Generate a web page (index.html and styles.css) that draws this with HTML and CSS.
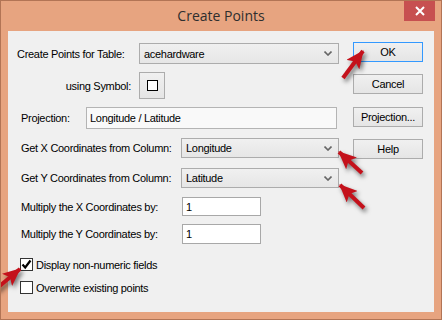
FILE: index.html
```html
<!DOCTYPE html>
<html lang="en">
<head>
    <meta charset="UTF-8">
    <title>Create Points</title>
    <link rel="stylesheet" href="styles.css">
</head>
<body>
    <div class="window">
        <div class="titlebar">
            <span></span>
            <span class="title">Create Points</span>
            <span class="close">
                <svg width="10" height="10" viewBox="0 0 10 10"><path d="M1 1 L9 9 M9 1 L1 9" stroke="#fff" stroke-width="2"/></svg>
            </span>
        </div>
        <div class="client">
            <div class="fields">
                <div class="row row-table">
                    <label class="lbl lbl-table">Create Points for Table:</label>
                    <div class="combo combo-table">
                        <span>acehardware</span>
                        <svg class="chev" width="8" height="5" viewBox="0 0 8 5"><path d="M0.5 0.5 L4 4 L7.5 0.5" fill="none" stroke="#666" stroke-width="1.6"/></svg>
                    </div>
                </div>
                <div class="row row-symbol">
                    <label class="lbl lbl-symbol">using Symbol:</label>
                    <div class="btn btn-symbol"><span class="square"></span></div>
                </div>
                <div class="row row-proj">
                    <label class="lbl lbl-proj">Projection:</label>
                    <div class="textbox textbox-proj">Longitude / Latitude</div>
                </div>
                <div class="row row-col">
                    <label class="lbl lbl-col">Get X Coordinates from Column:</label>
                    <div class="combo combo-col">
                        <span>Longitude</span>
                        <svg class="chev" width="8" height="5" viewBox="0 0 8 5"><path d="M0.5 0.5 L4 4 L7.5 0.5" fill="none" stroke="#666" stroke-width="1.6"/></svg>
                    </div>
                </div>
                <div class="row row-col row-gety">
                    <label class="lbl lbl-col">Get Y Coordinates from Column:</label>
                    <div class="combo combo-col">
                        <span>Latitude</span>
                        <svg class="chev" width="8" height="5" viewBox="0 0 8 5"><path d="M0.5 0.5 L4 4 L7.5 0.5" fill="none" stroke="#666" stroke-width="1.6"/></svg>
                    </div>
                </div>
                <div class="row row-mult">
                    <label class="lbl lbl-mult">Multiply the X Coordinates by:</label>
                    <div class="textbox textbox-mult">1</div>
                </div>
                <div class="row row-mult row-multy">
                    <label class="lbl lbl-mult">Multiply the Y Coordinates by:</label>
                    <div class="textbox textbox-mult">1</div>
                </div>
                <div class="check check-first">
                    <span class="box">
                        <svg width="11" height="11" viewBox="0 0 11 11"><path d="M1.5 5.5 L4.2 8.5 L9.5 1.5" fill="none" stroke="#000" stroke-width="2.2"/></svg>
                    </span>
                    <span>Display non-numeric fields</span>
                </div>
                <div class="check">
                    <span class="box"></span>
                    <span>Overwrite existing points</span>
                </div>
            </div>
            <div class="buttons">
                <div class="btn btn-ok">OK</div>
                <div class="btn btn-cancel">Cancel</div>
                <div class="btn btn-proj">Projection...</div>
                <div class="btn btn-help">Help</div>
            </div>
        </div>

        <svg class="arrows" width="442" height="320" viewBox="0 0 442 320">
            <defs>
                <marker id="head" markerUnits="userSpaceOnUse" markerWidth="18" markerHeight="16" refX="17" refY="8" orient="auto">
                    <path d="M0 0 L18 8 L0 16 L4 8 Z" fill="#c4111b"/>
                </marker>
            </defs>
            <g class="arrow-group">
                <line x1="343" y1="78" x2="363" y2="51" marker-end="url(#head)"/>
                <line x1="362" y1="173" x2="339" y2="152" marker-end="url(#head)"/>
                <line x1="364" y1="208" x2="340" y2="185" marker-end="url(#head)"/>
                <line x1="-4" y1="289" x2="20" y2="269" marker-end="url(#head)"/>
            </g>
        </svg>
    </div>
</body>
</html>
```

FILE: styles.css
```css
body {
    margin: 0;
    padding: 0;
    background: #fff;
    font-family: 'Liberation Sans', Arial, sans-serif;
    font-size: 11px;
    letter-spacing: -0.3px;
    color: #000;
}
.window {
    position: relative;
    width: 442px;
    height: 320px;
    box-sizing: border-box;
    background: #e7a480;
    border: 1px solid #b27455;
    overflow: hidden;
}
.titlebar {
    height: 30px;
    display: grid;
    grid-template-columns: 1fr auto 1fr;
    align-items: start;
}
.title {
    font-family: 'Open Sans', 'Noto Sans', sans-serif;
    font-size: 14px;
    letter-spacing: 0;
    color: #2e2e2e;
    line-height: 30px;
}
.close {
    justify-self: end;
    width: 31px;
    height: 20px;
    margin-right: 6px;
    background: #c75050;
    display: flex;
    align-items: center;
    justify-content: center;
}
.client {
    margin: 0 7px;
    height: 281px;
    background: #f0f0f0;
    display: flex;
}
.fields {
    flex: 1;
    padding-left: 9px;
    display: flex;
    flex-direction: column;
}
.row {
    display: flex;
    align-items: center;
}
.lbl {
    flex-shrink: 0;
    white-space: nowrap;
}
.row-table { margin-top: 12px; height: 21px; }
.lbl-table { width: 122px; }
.row-symbol { margin-top: 8px; height: 27px; }
.lbl-symbol { width: 114px; padding-right: 8px; text-align: right; }
.row-proj { margin-top: 8px; height: 22px; }
.lbl-proj { width: 65px; padding-left: 4px; }
.row-col { margin-top: 9px; height: 20px; }
.row-gety { margin-top: 10px; }
.lbl-col { width: 160px; padding-left: 4px; }
.row-mult { margin-top: 9px; height: 19px; }
.row-multy { margin-top: 8px; height: 20px; }
.lbl-mult { width: 161px; padding-left: 4px; }

.combo {
    box-sizing: border-box;
    height: 100%;
    border: 1px solid #acacac;
    background: linear-gradient(#f0f0f0, #e6e6e6);
    display: flex;
    align-items: center;
    justify-content: space-between;
    padding: 0 6px 0 4px;
}
.combo-table { width: 200px; }
.combo-col { width: 158px; }
.textbox {
    box-sizing: border-box;
    height: 100%;
    border: 1px solid #a8a8a8;
    background: #fff;
    display: flex;
    align-items: center;
    padding-left: 3px;
}
.textbox-proj { width: 251px; background: #f9f9f9; border-color: #b4b4b4; }
.textbox-mult { width: 79px; }

.btn {
    box-sizing: border-box;
    border: 1px solid #acacac;
    background: linear-gradient(#f0f0f0, #e5e5e5);
    display: flex;
    align-items: center;
    justify-content: center;
}
.btn-symbol {
    width: 26px;
    height: 27px;
}
.square {
    width: 9px;
    height: 9px;
    border: 1px solid #000;
    background: #fff;
}
.buttons {
    width: 70px;
    margin-right: 11px;
    display: flex;
    flex-direction: column;
}
.buttons .btn { height: 20px; }
.btn-ok { margin-top: 11px; border-color: #3399ff; }
.btn-cancel { margin-top: 12px; }
.btn-proj { margin-top: 13px; }
.btn-help { margin-top: 12px; }

.check {
    display: flex;
    align-items: center;
    gap: 3px;
    margin-top: 10px;
    margin-left: 3px;
    height: 13px;
}
.check-first { margin-top: 14px; }
.box {
    box-sizing: border-box;
    width: 13px;
    height: 13px;
    border: 1px solid #333;
    background: #fff;
    display: flex;
    align-items: center;
    justify-content: center;
}

.arrows {
    position: absolute;
    left: -1px;
    top: -1px;
    pointer-events: none;
}
.arrow-group {
    stroke: #c4111b;
    stroke-width: 4;
    filter: drop-shadow(2px 3px 2px rgba(0, 0, 0, 0.5));
}
```
